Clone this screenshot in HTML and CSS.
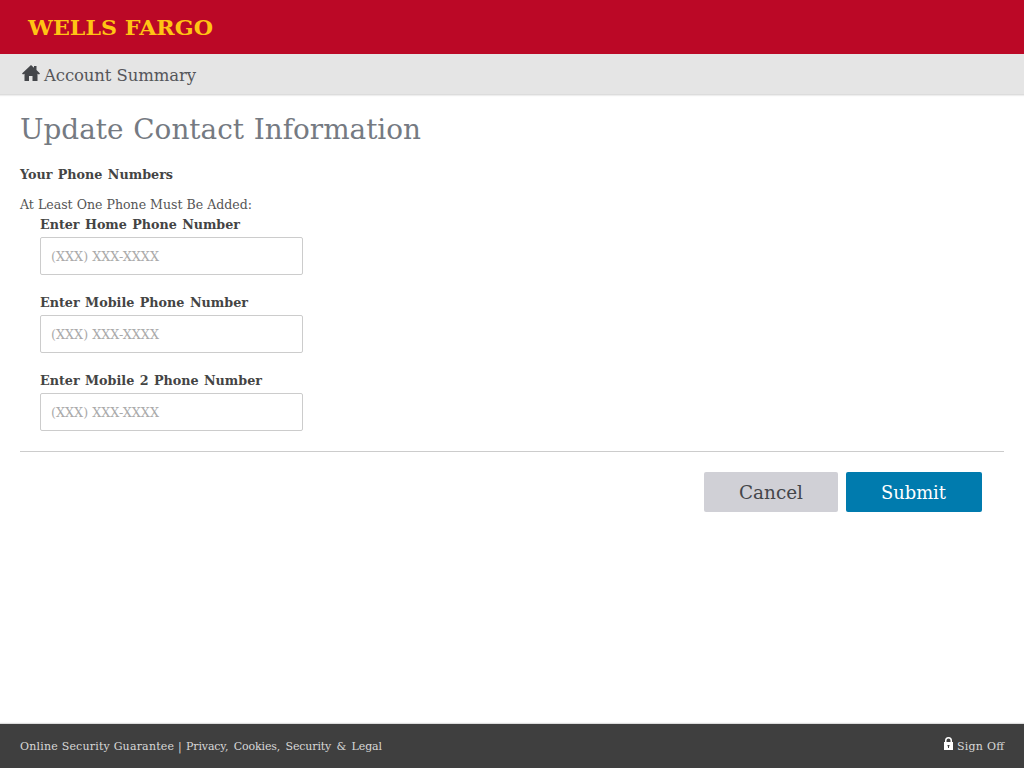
FILE: index.html
```html
<!DOCTYPE html>
<html lang="en">
<head>
<meta charset="utf-8">
<title>Update Contact Information</title>
<link rel="stylesheet" href="styles.css">
</head>
<body>
<header class="masthead"><svg class="logo" width="190" height="24"><text class="logo-text" x="0" y="19.5" textLength="185" lengthAdjust="spacingAndGlyphs">WELLS FARGO</text></svg></header>
<nav class="nav">
<svg class="home" width="18" height="16" viewBox="0 0 18 16"><path d="M9 0 0 8.5l1 1 1.5-.8V16H7v-5h3.5v5h5V8.7l1.5.8 1-1L14.5 5V1H12v1.7z"/></svg>
<a class="nav-link"><svg class="line" width="153" height="26"><text x="0" y="19" textLength="152" lengthAdjust="spacing">Account Summary</text></svg></a>
</nav>
<main class="main">
<h1 class="title"><svg class="line" width="410" height="40"><text x="0" y="29" textLength="401" lengthAdjust="spacingAndGlyphs">Update Contact Information</text></svg></h1>
<h2 class="subtitle"><svg class="line" width="200" height="20"><text x="0" y="15" textLength="153" lengthAdjust="spacingAndGlyphs">Your Phone Numbers</text></svg></h2>
<p class="note"><svg class="line" width="240" height="20"><text x="0" y="15" textLength="232" lengthAdjust="spacingAndGlyphs">At Least One Phone Must Be Added:</text></svg></p>
<div class="fields">
<div class="field"><svg class="line label" width="240" height="20"><text x="0" y="15" textLength="200" lengthAdjust="spacingAndGlyphs">Enter Home Phone Number</text></svg><div class="input"><svg class="line" width="120" height="20"><text x="0" y="15" textLength="108" lengthAdjust="spacingAndGlyphs">(XXX) XXX-XXXX</text></svg></div></div>
<div class="field"><svg class="line label" width="240" height="20"><text x="0" y="15" textLength="208" lengthAdjust="spacingAndGlyphs">Enter Mobile Phone Number</text></svg><div class="input"><svg class="line" width="120" height="20"><text x="0" y="15" textLength="108" lengthAdjust="spacingAndGlyphs">(XXX) XXX-XXXX</text></svg></div></div>
<div class="field"><svg class="line label" width="240" height="20"><text x="0" y="15" textLength="222" lengthAdjust="spacingAndGlyphs">Enter Mobile 2 Phone Number</text></svg><div class="input"><svg class="line" width="120" height="20"><text x="0" y="15" textLength="108" lengthAdjust="spacingAndGlyphs">(XXX) XXX-XXXX</text></svg></div></div>
</div>
<div class="actions">
<button type="button" class="btn cancel"><svg class="line" width="64" height="26"><text x="0" y="19.5" textLength="64" lengthAdjust="spacingAndGlyphs">Cancel</text></svg></button>
<button type="button" class="btn submit"><svg class="line" width="66" height="26"><text x="0" y="19.5" textLength="65" lengthAdjust="spacingAndGlyphs">Submit</text></svg></button>
</div>
</main>
<footer class="footer">
<svg class="line" width="370" height="20"><text x="0" y="14" textLength="154" lengthAdjust="spacing">Online Security Guarantee</text><text x="158" y="14">|</text><text class="legal" x="166" y="14" textLength="196" lengthAdjust="spacing">Privacy, Cookies, Security &amp; Legal</text></svg>
<div class="signoff"><svg class="lock" width="9" height="13" viewBox="0 0 9 13"><path fill-rule="evenodd" d="M0 5h1V3.5a3.5 3.5 0 0 1 7 0V5h1v8H0zM2.5 5h4V3.5a2 2 0 0 0-4 0zM3.5 8v1.2H4V11h1V9.2h.5V8z"/></svg><svg class="line" width="47" height="20"><text x="0" y="14" textLength="47" lengthAdjust="spacing">Sign Off</text></svg></div>
</footer>
</body>
</html>
```
FILE: styles.css
```css
* { box-sizing: border-box; }
body { margin: 0; height: 768px; display: flex; flex-direction: column; background: #fff; color: #444; font-family: "DejaVu Serif", serif; font-size: 13px; }
svg { display: block; overflow: visible; }
.line text { fill: currentColor; }
.masthead { height: 54px; background: #bb0826; padding: 15px 0 0 28px; }
.logo-text { fill: #ffc414; font-weight: bold; font-size: 21px; }
.nav { height: 41px; display: flex; gap: 4px; padding: 8px 22px 0; background: #e5e5e5; border-bottom: 1px solid #dcdcdc; box-shadow: 0 1px 1px #eee; color: #55565a; font-size: 16.5px; }
.home { margin-top: 3px; fill: #44464a; }
.main { flex: 1; padding: 15px 20px 0; }
.title { margin: 0; height: 54px; font-weight: normal; font-size: 28px; color: #757a82; word-spacing: 1px; }
.subtitle { margin: 0; height: 30px; font-size: 13px; word-spacing: 1px; }
.note { margin: 0; height: 20px; color: #555; }
.fields { padding: 0 20px; height: 237px; }
.field { height: 78px; }
.label { font-weight: bold; word-spacing: 1px; }
.input { width: 263px; height: 38px; margin-top: 3px; padding: 8px 10px; border: 1px solid #ccc; border-radius: 2px; color: #aaa; }
.actions { border-top: 1px solid #ccc; padding: 20px 22px 0; display: flex; gap: 8px; justify-content: flex-end; }
.btn { height: 40px; border: 0; border-radius: 2px; padding: 0; display: flex; align-items: center; justify-content: center; font: 18px "DejaVu Serif", serif; color: #44464a; }
.cancel { width: 134px; background: #d0d0d6; }
.submit { width: 136px; background: #007bae; color: #fff; }
.footer { height: 44px; background: #3f3f3f; color: #d8d8d8; padding: 12px 20px 0; display: flex; justify-content: space-between; font-size: 11px; box-shadow: 0 -1px 1px #ddd; }
.legal { word-spacing: 2px; }
.signoff { display: flex; gap: 4px; }
.lock { margin-top: 1px; fill: #fff; }
```
